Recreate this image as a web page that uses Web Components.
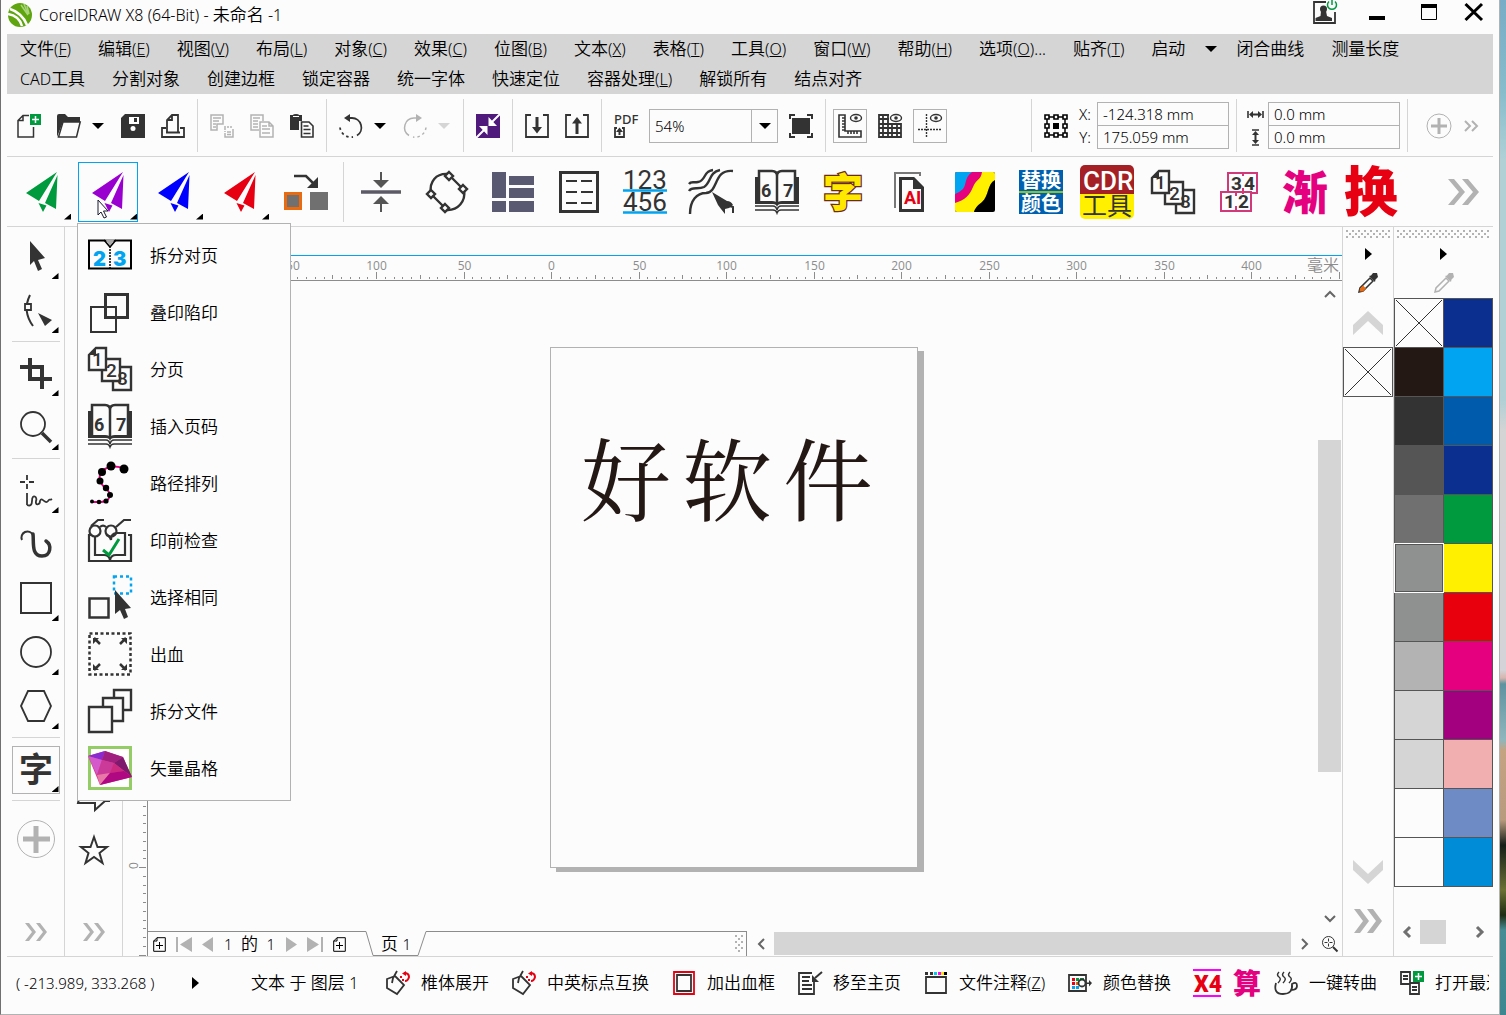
<!DOCTYPE html>
<html lang="zh-CN">
  <head>
    <meta charset="utf-8" />
    <meta name="viewport" content="width=device-width, initial-scale=1" />
    <title>CorelDRAW X8 (64-Bit) - 未命名 -1</title>
    <style>
      :root {
        --bg: #fcfcfc;
        --ink: #333;
        --line: #d5d5d5;
        --edge: #b2b2b2;
        --rule: #8c8c8c;
        --accent: #00a4f0;
      }

      body {
        margin: 0;
        height: 100vh;
        display: flex;
        overflow: hidden;
        color: #000;
        background: var(--bg);
        font: 350 17px/24px "Noto Sans", "Noto Sans CJK SC", sans-serif;
      }
    </style>
  </head>

  <body>
    <app-window>
      <title-bar>CorelDRAW X8 (64-Bit) - <span class="zh">未命名</span> -1</title-bar>

      <menu-bar>
        <menu-item key="F">文件</menu-item>
        <menu-item key="E">编辑</menu-item>
        <menu-item key="V">视图</menu-item>
        <menu-item key="L">布局</menu-item>
        <menu-item key="C">对象</menu-item>
        <menu-item key="C">效果</menu-item>
        <menu-item key="B">位图</menu-item>
        <menu-item key="X">文本</menu-item>
        <menu-item key="T">表格</menu-item>
        <menu-item key="O">工具</menu-item>
        <menu-item key="W">窗口</menu-item>
        <menu-item key="H">帮助</menu-item>
        <menu-item key="O" more>选项</menu-item>
        <menu-item key="T">贴齐</menu-item>
        <menu-item drop>启动</menu-item>
        <menu-item>闭合曲线</menu-item>
        <menu-item>测量长度</menu-item>
        <menu-item><span style="font-size: 16px">CAD</span>工具</menu-item>
        <menu-item>分割对象</menu-item>
        <menu-item>创建边框</menu-item>
        <menu-item>锁定容器</menu-item>
        <menu-item>统一字体</menu-item>
        <menu-item>快速定位</menu-item>
        <menu-item key="L">容器处理</menu-item>
        <menu-item>解锁所有</menu-item>
        <menu-item>结点对齐</menu-item>
      </menu-bar>

      <tool-bar>
        <tool-button icon="new" label="新建"></tool-button>
        <tool-button icon="open" label="打开"></tool-button>
        <tool-button class="drop" icon="drop" label="最近打开"></tool-button>
        <tool-button icon="save" label="保存"></tool-button>
        <tool-button icon="print" label="打印"></tool-button>
        <hr />
        <tool-button icon="cut" label="剪切" disabled></tool-button>
        <tool-button icon="copy" label="复制" disabled></tool-button>
        <tool-button icon="paste" label="粘贴"></tool-button>
        <hr />
        <tool-button icon="undo" label="撤消"></tool-button>
        <tool-button class="drop" icon="drop" label="撤消列表"></tool-button>
        <tool-button icon="redo" label="重做" disabled></tool-button>
        <tool-button class="drop" icon="dropOff" label="重做列表" disabled></tool-button>
        <hr />
        <tool-button icon="launch" label="搜索内容"></tool-button>
        <hr />
        <tool-button icon="import" label="导入"></tool-button>
        <tool-button icon="export" label="导出"></tool-button>
        <hr />
        <tool-button icon="pdf" label="发布为 PDF"></tool-button>
        <zoom-level></zoom-level>
        <tool-button icon="fit" label="全屏预览"></tool-button>
        <hr />
        <tool-button icon="rulers" label="显示标尺" boxed></tool-button>
        <tool-button icon="grid" label="显示网格"></tool-button>
        <tool-button icon="guides" label="显示辅助线" boxed></tool-button>
        <hr class="push" />
        <tool-button icon="origin" label="对象原点"></tool-button>
        <coord-pair first="-124.318 mm" second="175.059 mm" kind="position"></coord-pair>
        <hr />
        <coord-pair first="0.0 mm" second="0.0 mm" kind="size"></coord-pair>
        <hr class="tail" />
        <tool-button icon="plusSmall" label="自定义"></tool-button>
        <tool-button class="slim" icon="moreSmall" label="更多"></tool-button>
      </tool-bar>

      <tool-bar large>
        <tool-button icon="planeGreen" label="插件一" menu></tool-button>
        <tool-button icon="planePurple" label="插件二" menu active>
          <fly-out>
            <fly-item icon="splitSpread">拆分对页</fly-item>
            <fly-item icon="overprint">叠印陷印</fly-item>
            <fly-item icon="pages">分页</fly-item>
            <fly-item icon="book">插入页码</fly-item>
            <fly-item icon="pathArrange">路径排列</fly-item>
            <fly-item icon="preflight">印前检查</fly-item>
            <fly-item icon="selectSame">选择相同</fly-item>
            <fly-item icon="bleed">出血</fly-item>
            <fly-item icon="splitFile">拆分文件</fly-item>
            <fly-item icon="crystal">矢量晶格</fly-item>
          </fly-out>
        </tool-button>
        <tool-button icon="planeBlue" label="插件三" menu></tool-button>
        <tool-button icon="planeRed" label="插件四" menu></tool-button>
        <tool-button icon="swap" label="替换对象"></tool-button>
        <hr />
        <tool-button icon="squeeze" label="居中压缩"></tool-button>
        <tool-button icon="nodes" label="节点"></tool-button>
        <tool-button icon="blocks" label="拼版"></tool-button>
        <tool-button icon="sheet" label="表格"></tool-button>
        <tool-button icon="numbers" label="编号"></tool-button>
        <tool-button icon="curves" label="曲线工具"></tool-button>
        <tool-button icon="book" label="页码"></tool-button>
        <tool-button icon="goldChar" label="文字"></tool-button>
        <tool-button icon="aiFile" label="导出 AI"></tool-button>
        <tool-button icon="cmyk" label="分色"></tool-button>
        <tool-button icon="replaceColor" label="替换颜色"></tool-button>
        <tool-button icon="cdrTools" label="CDR 工具"></tool-button>
        <tool-button icon="pages" label="分页"></tool-button>
        <tool-button icon="impose" label="拼页"></tool-button>
        <tool-button icon="gradual" label="渐变"></tool-button>
        <tool-button icon="change" label="替换"></tool-button>
        <tool-button class="push" icon="moreLarge" label="更多"></tool-button>
      </tool-bar>

      <work-area>
        <tool-box>
          <tool-button icon="pick" label="选择" menu></tool-button>
          <tool-button icon="shape" label="形状" menu></tool-button>
          <hr />
          <tool-button icon="crop" label="裁剪" menu></tool-button>
          <tool-button icon="zoom" label="缩放" menu></tool-button>
          <hr />
          <tool-button icon="freehand" label="手绘" menu></tool-button>
          <tool-button icon="artistic" label="艺术笔"></tool-button>
          <tool-button icon="rect" label="矩形" menu></tool-button>
          <tool-button icon="ellipse" label="椭圆形" menu></tool-button>
          <tool-button icon="polygon" label="多边形" menu></tool-button>
          <hr />
          <tool-button icon="type" label="文本" menu boxed></tool-button>
          <hr />
          <tool-button class="tall" icon="plusLarge" label="自定义"></tool-button>
          <tool-button class="last" icon="more" label="更多"></tool-button>
        </tool-box>

        <tool-box narrow>
          <tool-button icon="callout" label="标注形状"></tool-button>
          <tool-button icon="star" label="星形"></tool-button>
          <tool-button class="last" icon="more" label="更多"></tool-button>
        </tool-box>

        <drawing-view></drawing-view>
        <doc-palette></doc-palette>
        <color-palette></color-palette>
      </work-area>

      <status-bar></status-bar>
    </app-window>
    <desktop-strip></desktop-strip>
  </body>

  <script type="text/javascript">
    // every entry is [width, height, svg markup], drawn in real pixels
    const INK = "#333";
    const FONT = `font-family="Noto Sans CJK SC"`;

    const plane = (color) => [
      32,
      40,
      `<path fill="${color}" d="M31 0 0 21l13 8zM31.500 3 19 31l11 6zM12.500 31l8 2.500L17 40z"/>`,
    ];

    const EYE = `<ellipse cx="18" cy="4" rx="5.500" ry="3.500" fill="#fcfcfc" stroke="${INK}" stroke-width="1.400"/><circle cx="18" cy="4" r="1.800" fill="${INK}"/>`;

    const ICONS = {
      // title bar
      logo: [24, 24, `<circle cx="12" cy="12" r="12" fill="#5fa50f"/>
        <path d="M2 6C9 8 16 14 19 22M0 11c6 1 12 5 14 12" stroke="#fff" stroke-width="2.500" fill="none"/>
        <path d="M13 2l7 10M16 1l4 10M19 3l2 8" stroke="#a9d47c" stroke-width="1.500"/>`],
      user: [24, 24, `<path d="M13 2H1V23H22V12" fill="none" stroke="${INK}" stroke-width="1.800"/>
        <circle cx="10.500" cy="9" r="3.500" fill="${INK}"/><path d="M8 11h5l1 5 5 2v3H2.500v-3l5-2z" fill="${INK}"/>
        <path d="M16 1.500a4.500 4.500 0 1 0 6 0M19 0v5" fill="none" stroke="#009a3e" stroke-width="1.500"/>`],
      min: [16, 16, `<path d="M0 12h16v4H0z"/>`],
      max: [16, 16, `<path d="M.500.500h15v15H.500z" fill="none" stroke="#000"/><path d="M0 0h16v4H0z"/>`],
      close: [20, 16, `<path d="M1.500 0 18 16M18 0 1.500 16" stroke="#000" stroke-width="3"/>`],

      // small arrows
      drop: [12, 6, `<path d="M0 0h12L6 6z"/>`],
      dropOff: [12, 6, `<path d="M0 0h12L6 6z" fill="#d5d5d5"/>`],
      play: [7, 12, `<path d="M0 0l7 6-7 6z"/>`],
      up: [12, 8, `<path d="M1 7l5-5 5 5" fill="none" stroke="#666" stroke-width="2"/>`],
      down: [12, 8, `<path d="M1 1l5 5 5-5" fill="none" stroke="#666" stroke-width="2"/>`],
      left: [8, 12, `<path d="M7 1L2 6l5 5" fill="none" stroke="#666" stroke-width="2"/>`],
      right: [8, 12, `<path d="M1 1l5 5-5 5" fill="none" stroke="#666" stroke-width="2"/>`],
      leftBold: [10, 12, `<path d="M8 1L3 6l5 5" fill="none" stroke="#707070" stroke-width="3"/>`],
      rightBold: [10, 12, `<path d="M2 1l5 5-5 5" fill="none" stroke="#707070" stroke-width="3"/>`],
      upBig: [30, 24, `<path d="M0 14 15 0 30 14V24L15 10 0 24z" fill="#d5d5d5"/>`],
      downBig: [30, 24, `<path d="M0 0 15 14 30 0V10L15 24 0 10z" fill="#d5d5d5"/>`],
      moreSmall: [14, 12, `<path d="M1 1l5 5-5 5M8 1l5 5-5 5" fill="none" stroke="#b2b2b2" stroke-width="2"/>`],
      more: [24, 18, `<path d="M1 0h4l7 9-7 9H1l7-9zM12 0h4l7 9-7 9h-4l7-9z" fill="#b2b2b2"/>`],
      moreLarge: [31, 26, `<path d="M0 0h6l11 13L6 26H0l11-13zM14 0h6l11 13-11 13h-6l11-13z" fill="#b2b2b2"/>`],
      moreDark: [30, 24, `<path d="M1 0h6l9 12L7 24H1l9-12zM14 0h6l9 12-9 12h-6l9-12z" fill="#b2b2b2"/>`],
      plusSmall: [26, 26, `<circle cx="13" cy="13" r="12" fill="none" stroke="#b2b2b2"/><path d="M13 5v16M5 13h16" stroke="#b2b2b2" stroke-width="3"/>`],
      plusLarge: [38, 38, `<circle cx="19" cy="19" r="18.500" fill="none" stroke="#b2b2b2"/><path d="M19 6v27M6 19h27" stroke="#b2b2b2" stroke-width="5"/>`],

      // standard toolbar
      new: [24, 24, `<path d="M12 1.500H6L1 6.500V23H16.500V13M6 1.500v5H1" fill="none" stroke="${INK}" stroke-width="1.500"/>
        <path d="M13 0h11v11H13z" fill="#009a3e"/><path d="M18.500 2v7M15 5.500h7" stroke="#fff" stroke-width="1.500"/>`],
      open: [24, 24, `<path d="M0 23V2q0-2 2-2h6l3 3h12v5H6z" fill="${INK}"/><path d="M6 8h17.200L19.500 23H1.500z" fill="#fcfcfc" stroke="${INK}" stroke-width="1.500"/>`],
      save: [24, 24, `<path d="M4 0h20v24H0V4z" fill="${INK}"/><path d="M8 3h10v7H8z" fill="#fff"/><path d="M13 4h3v4h-3z" fill="${INK}"/><circle cx="12" cy="14.500" r="2.500" fill="#fff"/>`],
      print: [24, 24, `<path d="M5 14H1v9h22v-9h-4M5 18.500h14" fill="none" stroke="${INK}" stroke-width="1.800"/><path d="M6 18V6l5-5h6v17M11 1v5H6" fill="none" stroke="${INK}" stroke-width="1.800"/>`],
      cut: [24, 24, `<g fill="none" stroke="#b2b2b2" stroke-width="1.500"><path d="M1 1h12v9H7v6H1zM3 4h8M3 7h6M3 10h3M3 13h3"/><path d="M23 15v8h-8v-4" /><path d="M14 13h9M15 14v4" stroke-dasharray="2 1"/><path d="M17 18h4M17 20.500h4"/></g>`],
      copy: [24, 24, `<g fill="none" stroke="#b2b2b2" stroke-width="1.500"><path d="M9 16H1V1h12v6M3 4h7M3 7h5M3 10h5M3 13h5"/><path d="M10 8h9l4 4v11H10zM19 8v4h4M12 12h5M12 15h8M12 19h8"/></g>`],
      paste: [24, 24, `<path d="M0 1h3q0-1 3-1t3 1h3v6H9v9H0z" fill="${INK}"/><path d="M3 2.500h6" stroke="#fff"/><path d="M11.500 8h7.500l4 4v11H11.500z" fill="#fcfcfc" stroke="${INK}" stroke-width="1.600"/><path d="M13.500 12h5M13.500 15.500h7M13.500 19.500h7" stroke="${INK}" stroke-width="1.500"/>`],
      undo: [24, 24, `<g fill="none" stroke="${INK}" stroke-width="1.800"><path d="M7 4h6a9.500 9.500 0 0 1 5 17.500"/><path d="M1 13.500a11 11 0 0 0 13 9.500" stroke-dasharray="2.500 3"/></g><path d="M5 4l6-4v8z" fill="${INK}"/>`],
      redo: [24, 24, `<g fill="none" stroke="#b2b2b2" stroke-width="1.500"><path d="M17 4h-6a9.500 9.500 0 0 0-5 17.500"/><path d="M23 13.500a11 11 0 0 1-13 9.500" stroke-dasharray="2.500 3"/></g><path d="M19 4l-6-4v8z" fill="#b2b2b2"/>`],
      launch: [24, 24, `<path d="M0 0h24v24H0z" fill="#4f1a7c"/><path d="M24 0l-8 8M0 24l8-8" stroke="#fff" stroke-width="2"/><path d="M12.500 3v9H21zM11.500 21v-9H3z" fill="#fff"/>`],
      import: [24, 24, `<path d="M6 1H1v22h22V1h-5" fill="none" stroke="${INK}" stroke-width="1.800"/><path d="M10.500 3h3v10H17l-5 6.500L7 13h3.500z" fill="${INK}"/>`],
      export: [24, 24, `<path d="M6 1H1v22h22V1h-5" fill="none" stroke="${INK}" stroke-width="1.800"/><path d="M10.500 20h3V9.500H17L12 3 7 9.500h3.500z" fill="${INK}"/>`],
      pdf: [25, 24, `<text x="0" y="10" font-size="13" font-family="Noto Sans" font-weight="500" fill="${INK}">PDF</text><path d="M3 14H1v9h9v-9H8" fill="none" stroke="${INK}" stroke-width="1.800"/><path d="M4.500 21v-3H2l3.500-4.500L9 18H6.500v3z" fill="${INK}"/>`],
      fit: [24, 24, `<path d="M3 4h18v16H3z" fill="${INK}"/><path d="M6 1H1v4M18 1h5v4M6 23H1v-4M18 23h5v-4" fill="none" stroke="${INK}" stroke-width="2"/>`],
      rulers: [24, 24, `<path d="M1 1h6v16h16v6H1zM4 4h3M4 7h3M4 10h3M4 13h3M4 16h3M10 17v3M13 17v3M16 17v3M19 17v3" fill="none" stroke="${INK}" stroke-width="1.600"/>${EYE}`],
      grid: [24, 24, `<path d="M11 1H1v22h22V10H1M5 1v22M10 1v22M14 10v13M19 10v13M1 5h10M1 14h22M1 19h22" fill="none" stroke="${INK}" stroke-width="1.800"/>${EYE}`],
      guides: [24, 24, `<path d="M8.500 0v24M0 15.500h24" stroke="${INK}" stroke-width="1.400" stroke-dasharray="2 1"/>${EYE}`],
      origin: [24, 24, `<path d="M3 3h18v18H3z" fill="none" stroke="#000" stroke-width="1.500"/><g fill="#fcfcfc" stroke="#000" stroke-width="1.600"><path d="M1 1h4v4H1zM10 1h4v4h-4zM19 1h4v4h-4zM1 10h4v4H1zM19 10h4v4h-4zM1 19h4v4H1zM10 19h4v4h-4zM19 19h4v4h-4z"/></g><path d="M9 9h6v6H9z"/>`],
      hsize: [17, 7, `<path d="M1 0v7M16 0v7" stroke="${INK}" stroke-width="1.600"/><path d="M2 3.500 6 0v2.500h5V0l4 3.500L11 7V4.500H6V7z" fill="${INK}"/>`],
      vsize: [7, 17, `<path d="M0 1h7M0 16h7" stroke="${INK}" stroke-width="1.600"/><path d="M3.500 2 0 6h2.500v5H0l3.500 4L7 11H4.500V6H7z" fill="${INK}"/>`],

      // plug-in toolbar
      planeGreen: plane("#009a3e"),
      planePurple: plane("#9900d0"),
      planeBlue: plane("#0000ff"),
      planeRed: plane("#e60012"),
      swap: [44, 36, `<path d="M10 2h12l9 9" fill="none" stroke="${INK}" stroke-width="2.500"/><path d="M34 3v11H23z" fill="${INK}"/><path d="M1.500 19.500h15v15h-15z" fill="#707070" stroke="#ea6a10" stroke-width="3"/><path d="M26 18h18v18H26z" fill="#707070"/>`],
      squeeze: [42, 42, `<path d="M1 21h40" stroke="#5c5a66" stroke-width="3.500"/><path d="M21 1v9M21 32v9" stroke="#555" stroke-width="2"/><path d="M13 9h16l-8 8zM13 33h16l-8-8z" fill="#555"/>`],
      nodes: [42, 42, `<g fill="none" stroke="${INK}" stroke-width="2.400"><path d="M23 4l14 14M5 23l14 14M22 3C10 2 3 11 5 22M20 39c12 1 20-9 18-20"/></g><g fill="#fcfcfc" stroke="${INK}" stroke-width="2.400"><path d="M23 1l4 4-4 4-4-4zM37 14l4 4-4 4-4-4zM5 19l4 4-4 4-4-4zM19 33l4 4-4 4-4-4z"/></g>`],
      blocks: [42, 42, `<path d="M0 1h14v26H0zM0 30h14v11H0zM17 5h25v9H17zM17 17h25v10H17zM17 30h25v11H17z" fill="#595a72"/>`],
      sheet: [40, 42, `<path d="M1.500 1.500h37v39h-37z" fill="none" stroke="${INK}" stroke-width="3"/><path d="M7 10h11M22 10h11M7 21h11M22 21h12M7 32h11M22 32h11" stroke="${INK}" stroke-width="2"/>`],
      numbers: [44, 44, `<g font-family="Roboto" font-size="26" fill="${INK}"><text x="0" y="19">123</text><text x="0" y="41">456</text></g><path d="M0 20.500h44M0 42.500h44" stroke="#00a4f0" stroke-width="2.500"/>`],
      curves: [44, 44, `<g fill="none" stroke="${INK}" stroke-width="2.400"><path d="M24 0C14 1 17 11 9 12c-5 1-7-1-9 2M31 0C20 2 22 13 15 17 9 20 3 16 0 21M44 1C24-1 30 22 17 23 8 23 1 30 1 44"/></g><path d="M23 22l15 9q4 0 6 4l-4 3-4 1v5l-4-5-3-4z" fill="${INK}"/><path d="M40 36l4 1v6" fill="none" stroke="${INK}" stroke-width="2"/>`],
      book: [44, 44, `<path d="M0 7v27h18q4 0 4 4 0-4 4-4h18V7h-4v24H27q-5 0-5 3 0-3-5-3H4V7z" fill="${INK}"/><path d="M4 31V1h13q5 0 5 5 0-5 5-5h13v30M22 5v29" fill="none" stroke="${INK}" stroke-width="2.500"/><path d="M0 36h18q3 0 4 4 1-4 4-4h18M0 40h18q3 0 4 3 1-3 4-3h18" fill="none" stroke="${INK}" stroke-width="1.500"/><g font-family="Roboto" font-weight="700" font-size="18" fill="${INK}"><text x="6" y="27">6</text><text x="28" y="27">7</text></g>`],
      goldChar: [42, 44, `<text x="1" y="37" ${FONT} font-size="40" font-weight="900" fill="#ffe800" stroke="#6b2a1c" stroke-width="2.500" paint-order="stroke">字</text>`],
      aiFile: [30, 40, `<path d="M1 36V1h25v3" fill="none" stroke="#777" stroke-width="2"/><path d="M6.500 6.500h13l9 9v23h-22z" fill="#fcfcfc" stroke="${INK}" stroke-width="3"/><path d="M19 5v12h11z" fill="${INK}"/><text x="10" y="32" font-family="Roboto" font-size="18" font-weight="700" fill="#e60012">AI</text>`],
      cmyk: [40, 40, `<clipPath id="c"><rect width="40" height="40" rx="2"/></clipPath><g clip-path="url(#c)"><path d="M0 0h40v40H0z" fill="#000"/><path d="M40 0v8C32 12 34 24 27 30q-7 5-8 10H0V0z" fill="#fff000"/><path d="M27 0C26 8 22 6 18 15S10 28 0 31V0z" fill="#e4007f"/><path d="M17 0C9 6 12 12 8 17q-3 3-8 5V0z" fill="#00a4f0"/></g>`],
      replaceColor: [44, 44, `<path d="M0 0h44v44H0z" fill="#0060b0"/><path d="M0 22h44" stroke="#8dc21f" stroke-width="2"/><g ${FONT} font-size="20" font-weight="700" fill="#fff"><text x="2" y="18">替换</text><text x="2" y="41">颜色</text></g>`],
      cdrTools: [54, 54, `<clipPath id="c"><rect width="54" height="54" rx="5"/></clipPath><g clip-path="url(#c)"><path d="M0 0h54v30H0z" fill="#a52024"/><path d="M0 29h54v25H0z" fill="#fff000"/></g><text x="3" y="25" font-family="Roboto" font-size="26" font-weight="500" fill="#fff">CDR</text><text x="2" y="50" ${FONT} font-size="25" fill="#333">工具</text>`],
      pages: [44, 44, `<g fill="#fcfcfc" stroke="${INK}" stroke-width="2.400"><path d="M25 20h18v23H25z"/><path d="M14 12h18v22H14z"/><path d="M8 1h10v22H1V8z"/></g><path d="M8 1v7H1z" fill="${INK}"/><g font-family="Roboto" font-weight="500" font-size="19" fill="${INK}"><text x="4" y="19">1</text><text x="18" y="30">2</text><text x="29" y="38">8</text></g>`],
      impose: [38, 40, `<g fill="#fcfcfc" stroke="#d03a78" stroke-width="2"><path d="M8 1h29v20H8z"/><path d="M1 20h30v19H1z"/></g><path d="M23 1v3M23 16v6M16 20v4M16 34v6" stroke="#d03a78" stroke-width="2"/><g font-family="Roboto" font-weight="700" font-size="19" fill="${INK}"><text x="11" y="18">3</text><text x="24" y="18">4</text><text x="4" y="36">1</text><text x="18" y="36">2</text></g>`],
      gradual: [46, 48, `<text x="0" y="41" ${FONT} font-size="46" font-weight="900" fill="#e4007f">渐</text>`],
      change: [54, 54, `<text x="0" y="47" ${FONT} font-size="54" font-weight="900" fill="#e60012">换</text>`],

      // fly-out
      splitSpread: [44, 32, `<path d="M1 1.500h42v28H1z" fill="none" stroke="#000" stroke-width="2"/><path d="M17 0h10l-5 7z" fill="#aaa"/><path d="M16 1l6 7 6-7M22 8v22" fill="none" stroke="#000" stroke-width="1.500" /><path d="M22 9v20" stroke="#fcfcfc" stroke-width="2" stroke-dasharray="1 2"/><g font-family="Inter" font-weight="900" font-size="20" fill="#00a4f0"><text x="5" y="27">2</text><text x="25" y="27">3</text></g>`],
      overprint: [44, 44, `<path d="M3 17h25v25H3z" fill="none" stroke="${INK}" stroke-width="2"/><path d="M17.500 4.500h22v23h-22z" fill="none" stroke="${INK}" stroke-width="3"/>`],
      pathArrange: [44, 44, `<path d="M37 8C26 3 9 6 12 20c3 8 13 10 9 17-2 5-11 4-17 4" fill="none" stroke="#e4007f" stroke-width="2"/><circle cx="36" cy="8" r="4.500"/><circle cx="23" cy="5" r="4.500"/><circle cx="14" cy="11" r="4"/><circle cx="12" cy="20" r="3.500"/><circle cx="18" cy="27" r="3.200"/><circle cx="22" cy="34" r="3"/><circle cx="18" cy="40" r="2.600"/><circle cx="11" cy="41" r="2.300"/><circle cx="4" cy="40.500" r="2"/>`],
      preflight: [44, 44, `<g fill="none" stroke="${INK}" stroke-width="2.200"><path d="M4 17H1v26h42V17h-3M7 19v18h9q5 0 6 5 1-5 6-5h9V15h-8q-6 0-6 7-1-4-5-5"/><circle cx="7" cy="13" r="5.500"/><circle cx="23" cy="13" r="5.500"/><path d="M3 8l7-6h6M28 9l8-7h7M12 9q3-3 6 0"/></g><path d="M15 32l6 5L31 21" fill="none" stroke="#009a3e" stroke-width="3"/>`],
      selectSame: [44, 44, `<path d="M26 1.500h17v17H26z" fill="none" stroke="#00a4f0" stroke-width="2.500" stroke-dasharray="3 3"/><path d="M1.500 23.500h19v19h-19z" fill="none" stroke="${INK}" stroke-width="2.500"/><path d="M27 15l16 18-6 1 3 8-4 2-4-9-5 4z" fill="${INK}"/>`],
      bleed: [44, 44, `<path d="M1.500 1.500h41v41h-41z" fill="none" stroke="${INK}" stroke-width="2.500" stroke-dasharray="3 2.500"/><path d="M12 12L6 6M32 12l6-6M12 32l-6 6M32 32l6 6" stroke="${INK}" stroke-width="2.500"/><path d="M5 6h6l-6 6zM39 6h-6l6 6zM5 38h6l-6-6zM39 38h-6l6-6z" fill="${INK}"/>`],
      splitFile: [44, 44, `<g fill="#fcfcfc" stroke="${INK}" stroke-width="2.400"><path d="M26 1h17v20H26z"/><path d="M15 9h20v23H15z"/><path d="M1 18h23v25H1z"/></g>`],
      crystal: [44, 44, `<path d="M1.500 1.500h41v41h-41z" fill="#fff" stroke="#94cc66" stroke-width="3"/><path d="M0 10 17 5l18 6 9 20-32 8z" fill="#d83b8a"/><path d="M0 10 17 5l-3 9z" fill="#8a2bd0"/><path d="M17 5l18 6-9 6-12-3z" fill="#a02080"/><path d="M0 10l14 4-5 15z" fill="#d45acb"/><path d="M14 14l12 3-4 10-13 2z" fill="#cb3a98"/><path d="M9 29l13-2-10 12z" fill="#e878a8"/><path d="M35 11l9 20-18-14z" fill="#7c1a6e"/><path d="M26 17l10 8-14 2z" fill="#cc2a80"/><path d="M22 27l14-2 8 6-32 8z" fill="#b00882"/>`],

      // toolbox
      pick: [32, 32, `<path d="M10 0l15 17-7 2 4 9-4 2-4-10-4 4z" fill="${INK}"/>`],
      shape: [32, 32, `<path d="M10 0Q2 16 13 31" fill="none" stroke="${INK}" stroke-width="2"/><path d="M5 9h6v6H5z" fill="#fcfcfc" stroke="${INK}" stroke-width="1.800"/><path d="M18 18l14 7-7 6z" fill="${INK}"/>`],
      crop: [32, 32, `<path d="M0 9h22v22M10 0v21h22" fill="none" stroke="${INK}" stroke-width="4"/>`],
      zoom: [32, 32, `<circle cx="13" cy="12" r="12" fill="none" stroke="${INK}" stroke-width="1.800"/><path d="M22 21l9 9" stroke="${INK}" stroke-width="3.500"/>`],
      freehand: [32, 32, `<path d="M7 0v5M7 9v5M0 7h5M9 7h5M7 18v12M7 30q5 2 5-4c0-8 6-4 4 0-1 5 4 4 4 0 2-5 5 4 8 0 2-3 1 0 4-2" fill="none" stroke="${INK}" stroke-width="1.800"/>`],
      artistic: [34, 34, `<path d="M3 12A6 6 0 1 1 14 7" fill="none" stroke="${INK}" stroke-width="2"/><path d="M14 6C15 14 12 28 23 28c9 0 10-11 4-15" fill="none" stroke="${INK}" stroke-width="3.500" stroke-linecap="round"/>`],
      rect: [32, 32, `<path d="M1 0h30v30H1z" fill="none" stroke="${INK}" stroke-width="2"/>`],
      ellipse: [32, 32, `<circle cx="16" cy="15" r="15" fill="none" stroke="${INK}" stroke-width="1.800"/>`],
      polygon: [32, 32, `<path d="M1 15 8 0h16l7 15-7 15H8z" fill="none" stroke="${INK}" stroke-width="1.800"/>`],
      type: [34, 34, `<text x="0" y="29" ${FONT} font-size="34" font-weight="700" fill="${INK}">字</text>`],
      callout: [32, 32, `<path d="M5 1h26v19h-4L17 29v-7H0z" fill="none" stroke="${INK}" stroke-width="2"/>`],
      star: [32, 32, `<path d="M16 2l3.500 10H29l-7.500 6L24.500 28 16 22l-8.500 6 3-10-7.500-6h9.500z" fill="none" stroke="${INK}" stroke-width="2"/>`],

      // page navigator
      addPage: [13, 15, `<path d="M4 .700h8.300v13.600H.700V4zM4 .700V4H.700" fill="none" stroke="#000"/><path d="M6.500 5v7M3 8.500h7" stroke="#000"/>`],
      first: [16, 15, `<path d="M1 0v15" stroke="#b2b2b2" stroke-width="2"/><path d="M16 0v15L4 7.500z" fill="#b2b2b2"/>`],
      prev: [11, 15, `<path d="M11 0v15L0 7.500z" fill="#b2b2b2"/>`],
      next: [11, 15, `<path d="M0 0v15l11-7.500z" fill="#b2b2b2"/>`],
      last: [16, 15, `<path d="M15 0v15" stroke="#b2b2b2" stroke-width="2"/><path d="M0 0v15l12-7.500z" fill="#b2b2b2"/>`],
      tab: [60, 25, `<path d="M0 .500 7 24.500h45L60 .500" fill="none" stroke="#8c8c8c"/>`],
      zoomFit: [16, 16, `<circle cx="6.500" cy="6.500" r="6" fill="none" stroke="#333"/><path d="M6.500 2.500v8M2.500 6.500h8" stroke="#333" stroke-dasharray="3 2"/><path d="M11 11l4.500 4.500" stroke="#333" stroke-width="2"/>`],

      // palettes
      dropper: [20, 20, `<path d="M1 19l1-4L12 5l3 3L5 18z" fill="#fcfcfc" stroke="${INK}" stroke-width="1.500"/><path d="M1.500 18.500l.500-3 3-3 3 3-3 3z" fill="#ea6a10"/><path d="M11 3l2-.500 2-2.500 4 0 1 4-2.500 2.500L17 9z" fill="${INK}"/>`],
      dropperOff: [20, 20, `<path d="M1 19l1-4L12 5l3 3L5 18z" fill="#fcfcfc" stroke="#b2b2b2" stroke-width="1.500"/><path d="M11 3l2-.500 2-2.500 4 0 1 4-2.500 2.500L17 9z" fill="#b2b2b2"/>`],
      noColor: [48, 48, `<path d="M1 1l46 46M47 1L1 47" stroke="#333" stroke-width="1"/>`],

      // status bar
      bucket: [24, 24, `<path d="M9 5 1 8v9l10 6 7-9L11 7zM6 12l1-5 4-7" fill="none" stroke="${INK}" stroke-width="1.800"/><path d="M18 2q5 0 5 4-1 4-4 4" fill="none" stroke="#e60012" stroke-width="2"/><path d="M20 0v5l-4-2.500zM14 5h2v2h-2zM16 8h2v2h-2z" fill="#e60012"/>`],
      bleedFrame: [24, 24, `<path d="M2 1h20v22H2z" fill="none" stroke="#e60012" stroke-width="1.800"/><path d="M5 4h14v16H5z" fill="none" stroke="${INK}" stroke-width="1.800"/>`],
      moveHome: [24, 24, `<path d="M16 11v12H1V2h13M4 6h8M4 10h7M4 14h10M4 18h10" fill="none" stroke="${INK}" stroke-width="1.800"/><path d="M24 1l-7 6" stroke="${INK}" stroke-width="2"/><path d="M14 4v7h7z" fill="${INK}"/>`],
      note: [24, 24, `<path d="M2 6h20v16H2z" fill="none" stroke="${INK}" stroke-width="1.800"/><path d="M1 1h3v3H1zM6 1h3v3H6z" fill="${INK}"/><path d="M10 1h3v3h-3z" fill="#00c8f0"/><path d="M14 1h3v3h-3z" fill="#f0f"/><path d="M17 1h3v3h-3z" fill="#ffe800"/><path d="M20 1h3v3h-3z"/>`],
      colorSwap: [24, 24, `<path d="M1 4h17v16H1z" fill="none" stroke="${INK}" stroke-width="1.800"/><path d="M4 7h3v3H4zM4 11h3v3H4z" fill="#e60012"/><path d="M8 7h3v3H8z" fill="#009a3e"/><path d="M12 7h4v3h-4z" fill="#009a3e"/><path d="M4 15h3v3H4zM8 15h3v3H8z" fill="#00a4f0"/><path d="M8 11h3v3H8z" fill="#ea6a10"/><circle cx="14" cy="12" r="3.500" fill="#fcfcfc" stroke="${INK}" stroke-width="1.800"/><path d="M17 11.500h4V9l3 3-3 3.500V13h-4z" fill="${INK}"/>`],
      x4: [28, 28, `<path d="M0 1h28M0 27h28" stroke="#f0f" stroke-width="2"/><text x="1" y="23" font-family="Roboto" font-size="23" font-weight="900" fill="#e60012">X4</text>`],
      calc: [28, 28, `<text x="0" y="25" ${FONT} font-size="28" font-weight="900" fill="#e4007f">算</text>`],
      cup: [24, 24, `<path d="M2 12q-3 11 7 11t9-10q5-3 5 2 0 4-6 4" fill="none" stroke="${INK}" stroke-width="1.800"/><path d="M5 1q-3 3 0 5t-1 6M10 1q-3 3 0 5t-1 6M16 1q-3 3 0 5t-1 6" fill="none" stroke="${INK}" stroke-width="1.500"/>`],
      openRecent: [24, 24, `<path d="M1 1h9v12H1zM10 12h9v11h-9zM3 5h5M3 8h5M12 16h5M12 19h5" fill="none" stroke="${INK}" stroke-width="1.800"/><path d="M13 0h11v11H13z" fill="#009a3e"/><path d="M18.500 2v7M15 5.500h7" stroke="#fff" stroke-width="1.500"/>`],
      cursor: [12, 20, `<path d="M1 1v15l3-3 3 6 2.500-1-3-6H11z" fill="#fff" stroke="#1a1a33"/>`],
    };

    class UiElement extends HTMLElement {
      constructor() {
        super();
        this.attachShadow({ mode: "open" });
      }

      connectedCallback() {
        this.shadowRoot.innerHTML = `<style>${this.styles()}</style>${this.render()}`;
      }

      styles() {
        return ":host { display: block; }";
      }

      render() {
        return "<slot></slot>";
      }
    }

    class UiIcon extends UiElement {
      styles() {
        return `:host { display: block; flex: none; } svg { display: block; overflow: visible; }`;
      }

      render() {
        const [w, h, body] = ICONS[this.getAttribute("name")];
        return `<svg width="${w}" height="${h}" viewBox="0 0 ${w} ${h}" aria-hidden="true">${body}</svg>`;
      }
    }

    class AppWindow extends UiElement {
      styles() {
        return `
          :host {
            position: relative;
            flex: 1;
            min-width: 0;
            box-sizing: border-box;
            display: flex;
            flex-direction: column;
            padding: 0 6px;
            border: solid var(--edge);
            border-width: 0 1px 1px;
            border-left-color: #707070;
          }
          /* mouse pointer, hovering over the second plug-in button */
          .cursor { position: absolute; left: 96px; top: 199px; z-index: 20; pointer-events: none; }
        `;
      }

      render() {
        return `<slot></slot><ui-icon class="cursor" name="cursor"></ui-icon>`;
      }
    }

    class DesktopStrip extends UiElement {
      styles() {
        return `
          :host {
            flex: 0 0 6px;
            background: linear-gradient(#79acc6 0, #86bccb 90px, #b0d0d6 160px, #b0d0d6 400px,
              #d4d4d4 430px, #d4d4d8 670px, #d8b4ae 678px, #5f93a0 684px, #8fb6bd 740px,
              #c4a383 750px, #b89a7d 820px, #151f18 845px, #6b7034 890px, #1e2c12 915px,
              #468c94 930px, #3d8790 100%);
          }
        `;
      }
    }

    class TitleBar extends UiElement {
      styles() {
        return `
          :host { display: flex; height: 34px; flex: none; font-size: 16px; }
          h1 { margin: 3px auto 0 7px; font: inherit; }
          ::slotted(.zh) { font-size: 17px; }
          .logo { margin: 3px 0 0 1px; }
          button {
            width: 52px; height: 24px; padding: 0; border: 0; background: none;
            display: flex; align-items: center; justify-content: center;
          }
          .close { width: 38px; }
        `;
      }

      render() {
        return `
          <ui-icon class="logo" name="logo"></ui-icon>
          <h1><slot></slot></h1>
          <button aria-label="帐户"><ui-icon name="user"></ui-icon></button>
          <button aria-label="最小化"><ui-icon name="min"></ui-icon></button>
          <button aria-label="最大化"><ui-icon name="max"></ui-icon></button>
          <button class="close" aria-label="关闭"><ui-icon name="close"></ui-icon></button>
        `;
      }
    }

    class MenuBar extends UiElement {
      styles() {
        return `
          :host {
            display: flex; flex-wrap: wrap; flex: none; column-gap: 27px;
            padding: 0 13px; background: #d5d5d5;
          }
        `;
      }
    }

    class MenuItem extends UiElement {
      styles() {
        return `
          button {
            display: flex; align-items: center; height: 30px; padding: 0; border: 0;
            background: none; color: inherit; font: inherit; white-space: nowrap;
          }
          .key { font-size: 16px; }
          ui-icon { margin: 0 -8px 0 20px; }
        `;
      }

      render() {
        const key = this.getAttribute("key");
        const more = this.hasAttribute("more") ? "..." : "";
        return `
          <button><span><slot></slot>${key ? `<span class="key">(<u>${key}</u>)${more}</span>` : ""}</span>
          ${this.hasAttribute("drop") ? `<ui-icon name="drop"></ui-icon>` : ""}</button>
        `;
      }
    }

    class ToolBar extends UiElement {
      styles() {
        return `
          :host {
            --cell: 40px;
            display: flex; align-items: center; flex: none; box-sizing: border-box;
            height: 63px; padding: 1px 10px 0 2px; border-bottom: 1px solid var(--line);
          }
          ::slotted(hr) {
            width: 1px; height: 53px; margin: 0 4px; border: 0; background: var(--line);
          }
          ::slotted([boxed]) { --cell: 34px; margin: 0 3px; }
          ::slotted(.slim) { --cell: 24px; }
          ::slotted(.drop) { --cell: 18px; margin-right: 6px; }
          ::slotted(.push) { margin-left: auto; }
          ::slotted(.tail) { margin-right: 11px; }
          :host([large]) { --cell: 60px; height: 70px; gap: 6px; padding: 0 0 0 5px; }
          :host([large]) ::slotted(hr) { height: 60px; margin: 0 1px; }
        `;
      }
    }

    class ToolButton extends UiElement {
      styles() {
        return `
          :host { position: relative; display: block; flex: none; }
          button {
            width: var(--cell); height: var(--cell-height, var(--cell)); padding: 0;
            border: 0; background: none; display: flex; align-items: center; justify-content: center;
          }
          :host([boxed]) button { border: 1px solid var(--edge); }
          :host([active]) button { border: 1px solid var(--accent); }
          .corner {
            position: absolute; right: 1px; bottom: 2px; width: 7px; height: 6px;
            background: #000; clip-path: polygon(100% 0, 100% 100%, 0 100%);
          }
        `;
      }

      render() {
        return `
          <button aria-label="${this.getAttribute("label")}" ${this.hasAttribute("disabled") ? "disabled" : ""}>
            <ui-icon name="${this.getAttribute("icon")}"></ui-icon>
          </button>
          ${this.hasAttribute("menu") ? `<span class="corner"></span>` : ""}
          <slot></slot>
        `;
      }
    }

    class ZoomLevel extends UiElement {
      styles() {
        return `
          :host { display: grid; grid-template-columns: 1fr 27px; width: 129px; height: 34px; margin: 0 3px; }
          select {
            grid-area: 1 / 1 / 2 / 3; appearance: none; border: 1px solid var(--edge); border-radius: 0;
            padding: 0 5px; background: none; color: #000; font: inherit; font-size: 15px;
          }
          .arrow {
            grid-area: 1 / 2; display: flex; align-items: center; justify-content: center;
            border-left: 1px solid var(--edge); margin: 1px 0; padding-right: 1px; pointer-events: none;
          }
        `;
      }

      render() {
        return `
          <select aria-label="缩放级别"><option>54%</option></select>
          <span class="arrow"><ui-icon name="drop"></ui-icon></span>
        `;
      }
    }

    class CoordPair extends UiElement {
      styles() {
        return `
          :host {
            display: grid; grid-template-columns: auto 132px; align-items: center;
            column-gap: 3px; margin-right: 3px; font-size: 15px;
          }
          label { display: flex; justify-content: center; min-width: 18px; line-height: 23px; }
          :host([kind="size"]) { column-gap: 4px; margin-left: 5px; }
          input {
            box-sizing: border-box; width: 132px; height: 24px; padding: 0 5px;
            border: 1px solid var(--edge); background: none; color: #000; font: inherit;
          }
          input + label + input { margin-top: -1px; }
        `;
      }

      render() {
        const size = this.getAttribute("kind") === "size";
        const first = size ? `<ui-icon name="hsize"></ui-icon>` : "X:";
        const second = size ? `<ui-icon name="vsize"></ui-icon>` : "Y:";
        return `
          <label for="a" ${size ? `aria-label="宽度"` : ""}>${first}</label>
          <input id="a" value="${this.getAttribute("first")}" />
          <label for="b" ${size ? `aria-label="高度"` : ""}>${second}</label>
          <input id="b" value="${this.getAttribute("second")}" />
        `;
      }
    }

    class FlyOut extends UiElement {
      styles() {
        return `
          :host {
            position: absolute; left: -1px; top: 61px; z-index: 10; box-sizing: border-box;
            width: 214px; padding: 3px 0; background: var(--bg); border: 1px solid var(--edge);
          }
        `;
      }
    }

    class FlyItem extends UiElement {
      styles() {
        return `
          button {
            display: grid; grid-template-columns: 44px 1fr; align-items: center; justify-items: start;
            column-gap: 18px; width: 100%; height: 57px; padding: 0 10px; border: 0;
            background: none; color: inherit; font: inherit;
          }
          span { padding-top: 2px; }
        `;
      }

      render() {
        return `<button><ui-icon name="${this.getAttribute("icon")}"></ui-icon><span><slot></slot></span></button>`;
      }
    }

    class WorkArea extends UiElement {
      styles() {
        return `:host { display: flex; flex: 1; min-height: 0; }`;
      }
    }

    class ToolBox extends UiElement {
      styles() {
        return `
          :host {
            --cell: 48px;
            display: flex; flex-direction: column; align-items: center; gap: 6px; flex: none;
            box-sizing: border-box; width: 58px; padding-top: 6px; border-right: 1px solid var(--line);
          }
          ::slotted(hr) { width: 48px; height: 1px; margin: 0 0 2px; border: 0; background: var(--line); }
          ::slotted(.tall) { --cell-height: 60px; }
          ::slotted(.last) { margin-top: auto; }
          /* the upper tools of this column sit under the open fly-out */
          :host([narrow]) { padding-top: 546px; }
        `;
      }
    }

    class RulerBar extends UiElement {
      styles() {
        return `
          :host { display: block; overflow: hidden; }
          svg { display: block; width: 100%; height: 100%; }
          path { stroke: var(--rule); }
          text { font: 12px "Open Sans", sans-serif; fill: var(--rule); text-anchor: middle; }
        `;
      }

      // one tick per 5 mm, a label per 50 mm; zero sits at the page corner
      render() {
        const zero = Number(this.getAttribute("zero"));
        const vertical = this.hasAttribute("vertical");
        let path = "";
        let labels = "";
        for (let i = -70; i <= 200; i++) {
          const at = Math.round(zero + i * 8.75) + 0.5;
          if (at < 0) continue;
          const major = i % 10 === 0;
          const long = major ? 7 : i % 5 === 0 ? 4 : 2;
          if (vertical) {
            path += `M${major ? 16 : 20} ${at}H23`;
            if (major && i <= 0) labels += `<text transform="translate(15 ${at - 2}) rotate(-90)">${Math.abs(i) * 5}</text>`;
          } else {
            path += `M${at} ${23 - long}v${long}`;
            if (major && i <= 80) labels += `<text x="${at}" y="14">${Math.abs(i) * 5}</text>`;
          }
        }
        return `<svg><path d="${path}"/>${labels}</svg>`;
      }
    }

    class DrawingView extends UiElement {
      styles() {
        return `
          :host {
            display: grid; flex: 1; min-width: 0; padding-top: 28px;
            grid-template: 26px 1fr 25px / 25px 1fr 25px;
          }
          .top {
            grid-area: 1 / 2 / 2 / 4; position: relative; box-sizing: border-box;
            border-top: 1px solid var(--accent); border-bottom: 1px solid var(--rule);
          }
          .top ruler-bar { height: 24px; }
          .unit {
            position: absolute; right: 3px; top: 0; font-size: 16px; line-height: 18px;
            color: var(--rule); background: var(--bg);
          }
          .side { grid-area: 2 / 1 / 4 / 2; border-right: 1px solid var(--rule); }
          .canvas { grid-area: 2 / 2; position: relative; overflow: hidden; }
          .page {
            position: absolute; left: 402px; top: 66px; box-sizing: border-box;
            width: 368px; height: 521px; padding: 82px 0 0 30px;
            border: 1px solid var(--edge);
            box-shadow: 6px 4px 0 var(--edge); background: var(--bg);
            display: flex; gap: 11px;
            font: 400 90px/90px "Noto Serif CJK SC", "Noto Sans CJK SC", serif; color: #241815;
          }
          .scroll { grid-area: 2 / 3; display: flex; flex-direction: column; align-items: center; padding: 1px 1px 0; }
          .track { flex: 1; width: 100%; display: grid; grid-template-rows: 134fr 331fr 135fr; }
          .track i { grid-row: 2; background: #d5d5d5; }
          button { padding: 0; border: 0; background: none; display: flex; align-items: center; justify-content: center; }
          .scroll button { width: 24px; height: 24px; }
          .foot { grid-area: 3 / 2 / 4 / 4; display: flex; }
          page-nav { flex: 599; }
          .bar { flex: 571; display: flex; align-items: stretch; }
          .bar button { width: 27px; }
          .bar i { flex: 1; margin: 1px 0; background: #d5d5d5; }
          .fit { width: 24px; }
        `;
      }

      render() {
        return `
          <div class="top"><ruler-bar zero="403"></ruler-bar><span class="unit">毫米</span></div>
          <ruler-bar class="side" vertical zero="586"></ruler-bar>
          <div class="canvas">
            <div class="page"><span>好</span><span>软</span><span>件</span></div>
          </div>
          <div class="scroll">
            <button aria-label="向上"><ui-icon name="up"></ui-icon></button>
            <div class="track"><i></i></div>
            <button aria-label="向下"><ui-icon name="down"></ui-icon></button>
          </div>
          <div class="foot">
            <page-nav></page-nav>
            <div class="bar">
              <button aria-label="向左"><ui-icon name="left"></ui-icon></button>
              <i></i>
              <button aria-label="向右"><ui-icon name="right"></ui-icon></button>
            </div>
            <button class="fit" aria-label="导航器"><ui-icon name="zoomFit"></ui-icon></button>
          </div>
        `;
      }
    }

    class PageNav extends UiElement {
      styles() {
        return `
          :host { display: flex; min-width: 0; font-size: 17px; line-height: 24px; }
          nav {
            display: flex; align-items: center; gap: 10px; padding: 0 20px 0 5px;
            border-top: 1px solid var(--rule);
          }
          button { padding: 0; border: 0; background: none; color: inherit; font: inherit; white-space: nowrap; }
          .en { font-size: 15px; }
          .count { width: 51px; margin: 0 1px; display: flex; justify-content: space-between; align-items: center; white-space: nowrap; }
          .tab { display: grid; place-items: center; width: 60px; }
          .tab > * { grid-area: 1 / 1; }
          .rest {
            flex: 1; display: flex; justify-content: flex-end; align-items: center; padding-right: 3px;
            border: solid var(--rule); border-width: 1px 1px 0 0;
          }
          .grip {
            width: 8px; height: 18px;
            background:
              conic-gradient(from 270deg at 2px 2px, #b2b2b2 90deg, transparent 0) 0 0 / 6px 6px,
              conic-gradient(from 270deg at 2px 2px, #b2b2b2 90deg, transparent 0) 3px 3px / 6px 6px;
          }
        `;
      }

      render() {
        const button = (icon, label) => `<button aria-label="${label}"><ui-icon name="${icon}"></ui-icon></button>`;
        return `
          <nav>
            ${button("addPage", "在前添加页")}
            ${button("first", "第一页")}
            ${button("prev", "上一页")}
            <span class="count"><span class="en">1</span> <span>的</span> <span class="en">1</span></span>
            ${button("next", "下一页")}
            ${button("last", "最后一页")}
            ${button("addPage", "在后添加页")}
          </nav>
          <div class="tab"><ui-icon name="tab"></ui-icon><button>页 <span class="en">1</span></button></div>
          <div class="rest"><span class="grip"></span></div>
        `;
      }
    }

    const PALETTE_STYLES = `
      :host {
        display: flex; flex-direction: column; flex: none; padding: 3px 0 0;
        border-left: 1px solid var(--line);
      }
      .grip {
        height: 8px; margin: 0 3px 2px;
        background:
          conic-gradient(from 270deg at 2px 2px, #b2b2b2 90deg, transparent 0) 0 0 / 6px 6px,
          conic-gradient(from 270deg at 2px 2px, #b2b2b2 90deg, transparent 0) 3px 3px / 6px 6px;
      }
      button { padding: 0; border: 0; background: none; display: flex; align-items: center; justify-content: center; }
      .flyout { height: 27px; }
      .dropper { height: 31px; }
      .swatches { display: grid; gap: 1px; padding: 1px; background: #555; }
      .swatches button { height: 48px; background: var(--bg); }
    `;

    class DocPalette extends UiElement {
      styles() {
        return `
          ${PALETTE_STYLES}
          :host { width: 50px; padding-bottom: 11px; }
          .step { height: 49px; }
          .push { margin-top: auto; }
        `;
      }

      render() {
        return `
          <div class="grip"></div>
          <button class="flyout" aria-label="选项"><ui-icon name="play"></ui-icon></button>
          <button class="dropper" aria-label="滴管"><ui-icon name="dropper"></ui-icon></button>
          <button class="step" aria-label="向上"><ui-icon name="upBig"></ui-icon></button>
          <div class="swatches"><button aria-label="无色"><ui-icon name="noColor"></ui-icon></button></div>
          <button class="step push" aria-label="向下"><ui-icon name="downBig"></ui-icon></button>
          <button class="step" aria-label="更多"><ui-icon name="moreDark"></ui-icon></button>
        `;
      }
    }

    // default palette, row by row: grey ramp on the left, colours on the right
    const SWATCHES = [
      ["none", "#0b2f8f"],
      ["#241815", "#00a4f0"],
      ["#333333", "#005bac"],
      ["#555555", "#0b2f8f"],
      ["#707070", "#009a3e"],
      ["#8e9190", "#fff000"],
      ["#8e9190", "#e9000d"],
      ["#b3b3b3", "#e4007f"],
      ["#d5d5d5", "#a2007f"],
      ["#d5d5d5", "#f2afb0"],
      ["#fcfcfc", "#6f8bc6"],
      ["#fcfcfc", "#008cd6"],
    ];

    class ColorPalette extends UiElement {
      styles() {
        return `
          ${PALETTE_STYLES}
          .swatches { grid-template-columns: 48px 48px; }
          .swatches .current { box-shadow: 0 0 0 1px #fff, inset 0 0 0 1px #555; }
          .bar { display: flex; align-items: center; height: 48px; margin-top: auto; }
          .bar button { width: 26px; height: 24px; }
          .bar i { width: 26px; height: 24px; background: #d5d5d5; margin-right: auto; }
        `;
      }

      render() {
        const cell = (color, row, col) =>
          color === "none"
            ? `<button aria-label="无色"><ui-icon name="noColor"></ui-icon></button>`
            : `<button class="${row === 5 && col === 0 ? "current" : ""}" aria-label="${color}" style="background: ${color}"></button>`;
        return `
          <div class="grip"></div>
          <button class="flyout" aria-label="选项"><ui-icon name="play"></ui-icon></button>
          <button class="dropper" aria-label="滴管"><ui-icon name="dropperOff"></ui-icon></button>
          <div class="swatches">${SWATCHES.map((pair, row) => pair.map((c, col) => cell(c, row, col)).join("")).join("")}</div>
          <div class="bar">
            <button aria-label="向左"><ui-icon name="leftBold"></ui-icon></button>
            <i></i>
            <button aria-label="向右"><ui-icon name="rightBold"></ui-icon></button>
          </div>
        `;
      }
    }

    const COMMANDS = [
      ["bucket", "椎体展开"],
      ["bucket", "中英标点互换"],
      ["bleedFrame", "加出血框"],
      ["moveHome", "移至主页"],
      ["note", `文件注释<span class="en">(<u>Z</u>)</span>`],
      ["colorSwap", "颜色替换"],
      ["x4"],
      ["calc"],
      ["cup", "一键转曲"],
      ["openRecent", "打开最近"],
    ];

    class StatusBar extends UiElement {
      styles() {
        return `
          :host {
            display: flex; align-items: center; flex: none; box-sizing: border-box; height: 58px;
            padding: 0 4px 6px 9px; border-top: 1px solid var(--line); white-space: nowrap;
          }
          .en { font-size: 16px; }
          .coords { width: 176px; font-size: 15px; }
          .object { width: 135px; margin-left: 52px; }
          .commands {
            display: flex; align-items: center; align-self: stretch; gap: 23px;
            flex: 1; min-width: 0; overflow: hidden;
          }
          button {
            display: flex; align-items: center; gap: 11px; flex: none; padding: 0; border: 0;
            background: none; color: inherit; font: inherit;
          }
          .bare { margin: 0 -10px 0 -1px; }
        `;
      }

      render() {
        const command = ([icon, text]) =>
          text
            ? `<button><ui-icon name="${icon}"></ui-icon><span>${text}</span></button>`
            : `<button class="bare" aria-label="${icon}"><ui-icon name="${icon}"></ui-icon></button>`;
        return `
          <span class="coords">( -213.989, 333.268 )</span>
          <ui-icon name="play"></ui-icon>
          <span class="object">文本 于 图层 <span class="en">1</span></span>
          <div class="commands">${COMMANDS.map(command).join("")}</div>
        `;
      }
    }

    customElements.define("ui-icon", UiIcon);
    customElements.define("app-window", AppWindow);
    customElements.define("desktop-strip", DesktopStrip);
    customElements.define("title-bar", TitleBar);
    customElements.define("menu-bar", MenuBar);
    customElements.define("menu-item", MenuItem);
    customElements.define("tool-bar", ToolBar);
    customElements.define("tool-button", ToolButton);
    customElements.define("zoom-level", ZoomLevel);
    customElements.define("coord-pair", CoordPair);
    customElements.define("fly-out", FlyOut);
    customElements.define("fly-item", FlyItem);
    customElements.define("work-area", WorkArea);
    customElements.define("tool-box", ToolBox);
    customElements.define("ruler-bar", RulerBar);
    customElements.define("page-nav", PageNav);
    customElements.define("drawing-view", DrawingView);
    customElements.define("doc-palette", DocPalette);
    customElements.define("color-palette", ColorPalette);
    customElements.define("status-bar", StatusBar);
  </script>
</html>
